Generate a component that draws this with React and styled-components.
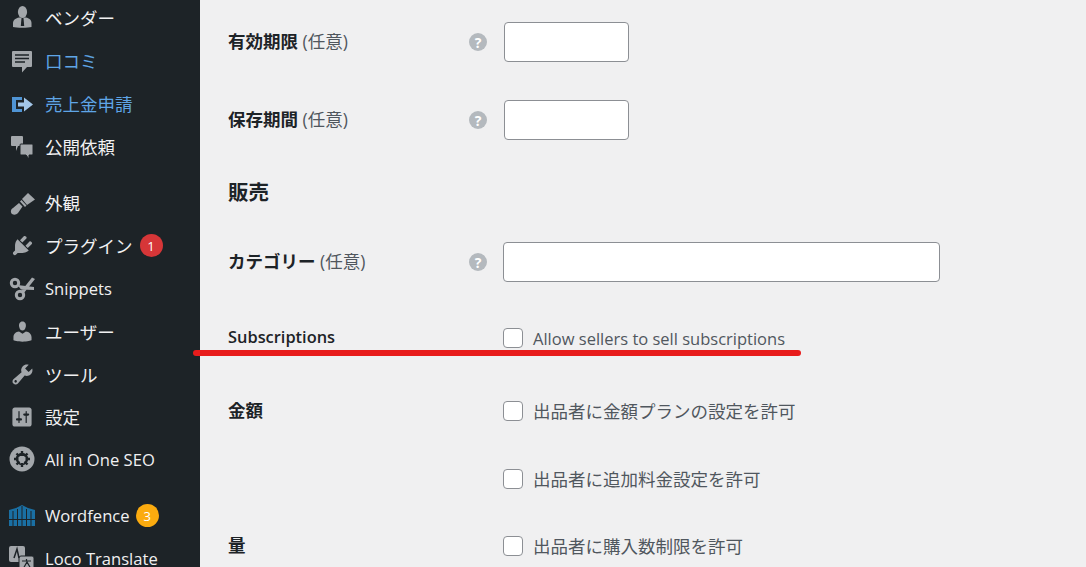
import React from 'react';
import styled, { createGlobalStyle } from 'styled-components';

const Global = createGlobalStyle`
  html, body { margin: 0; padding: 0; height: 567px; overflow: hidden; background: #f0f0f1; }
  body { font-family: "Open Sans", "Noto Sans CJK JP", sans-serif; }
  * { box-sizing: border-box; }
`;
const Page = styled.div`display: flex; width: 1086px; height: 567px; overflow: hidden;`;
const Sidebar = styled.nav`width: 200px; flex: none; background: #1d2327; height: 567px; overflow: hidden;`;
const MenuItem = styled.div`
  height: ${p => p.$h || 43}px; display: flex; align-items: center; padding-left: 9px; gap: 10px;
  margin-top: ${p => p.$gap || 0}px;
  color: ${p => p.$blue ? '#5fa5e6' : '#f0f0f1'}; font-size: ${p => p.$latin ? 16.6 : 17.5}px; white-space: nowrap;
`;
const IconBox = styled.span`width: 26px; height: 26px; flex: none; display: flex; align-items: center; justify-content: center;`;
const Badge = styled.span`
  width: 23px; height: 23px; border-radius: 50%; background: ${p => p.$c}; color: #fff; font-size: 13px;
  display: flex; align-items: center; justify-content: center; margin-left: ${p => p.$ml}px;
`;
const Main = styled.main`flex: 1; padding-left: 28px; color: #1d2327; position: relative;`;
const Row = styled.div`display: flex; align-items: center; height: ${p => p.$h}px;`;
const Label = styled.div`
  width: ${p => p.$w || 241}px; flex: none; font-size: ${p => p.$latin ? 16.4 : 17.5}px; font-weight: ${p => p.$latin ? 600 : 700};
  color: #1d2327; white-space: nowrap; padding-bottom: 3px;
`;
const Opt = styled.span`font-weight: 400; color: #50575e;`;
const Help = styled.span`width: ${p => p.$w}px; flex: none; display: flex;`;
const HelpDot = styled.span`
  width: 18px; height: 18px; border-radius: 50%; background: #b4b9be; color: #fff; font-size: 14px; font-weight: 700;
  display: flex; align-items: center; justify-content: center;
`;
const Input = styled.div`
  width: ${p => p.$w}px; height: 40px; background: #fff; border: 1px solid #8c8f94; border-radius: 4px;
`;
const Heading = styled.h2`margin: 0; font-size: 20.5px; font-weight: 700; color: #1d2327; height: 70px; display: flex; align-items: center;`;
const Check = styled.span`width: 20px; height: 20px; flex: none; border: 1px solid #8c8f94; border-radius: 4px; background: #fff;`;
const CheckText = styled.span`
  font-size: ${p => p.$latin ? 16.5 : 17.5}px; color: #50575e; white-space: nowrap; margin-left: 10px;
  padding-bottom: ${p => p.$latin ? 0 : 2}px;
`;
const Spacer = styled.div`width: 275px; flex: none;`;
const Underline = styled.div`
  position: absolute; left: -7px; top: 350px; width: 608px; height: 6px; border-radius: 3px; background: #e81c1c;
`;

const fill = '#a3a7ab';
const bg = '#1d2327';
const Dash = ({ d, size = 24 }) => (
  <svg width={size} height={size} viewBox="0 0 20 20"><path d={d} fill={fill} fillRule="evenodd" /></svg>
);
const icons = {
  person: <Dash size={25} d="M10 9.250c-2.270 0-2.730-3.440-2.730-3.440C7 4.020 7.820 2 9.970 2c2.160 0 2.980 2.020 2.710 3.810 0 0-.41 3.440-2.680 3.440zm0 2.570L12.720 10c2.390 0 4.520 2.330 4.520 4.530v2.490s-3.650 1.130-7.240 1.130c-3.650 0-7.240-1.130-7.240-1.130v-2.490c0-2.250 1.940-4.480 4.470-4.480z" />,
  vendor: <svg width="22" height="24" viewBox="0 0 22 24"><ellipse cx="11.500" cy="7" rx="4.600" ry="6" fill={fill}/><path d="M2 22v-4c0-3 3-5 6-5.500h7c3 .5 5.500 2.500 5.500 5.500v4c-3 1-15.500 1-18.500 0z" fill={fill}/><path d="M10.500 13h2l.7 8h-3.400z" fill={bg}/></svg>,
  comment: <svg width="22" height="24" viewBox="0 0 22 24"><path d="M2 2h18a1 1 0 0 1 1 1v14a1 1 0 0 1-1 1h-4l-5 5.500V18H2a1 1 0 0 1-1-1V3a1 1 0 0 1 1-1z" fill={fill}/><path d="M4 6h14M4 9.500h14M4 13h10" stroke={bg} strokeWidth="1.500"/></svg>,
  payout: <svg width="22" height="22" viewBox="0 0 22 22"><path d="M1 4h10v3H5v9h6v3H1z" fill="#4f94d4"/><path d="M7 9.500h6V4.500l9 7-9 7v-5H7z" fill="#a3c6e8"/></svg>,
  chat: <svg width="24" height="24" viewBox="0 0 24 24"><path d="M1 2a1 1 0 0 1 1-1h10a1 1 0 0 1 1 1v9H8l-2 5v-5H2a1 1 0 0 1-1-1z" fill={fill}/><path d="M11 9h11a1 1 0 0 1 1 1v9a1 1 0 0 1-1 1h-3v4l-3-4h-5a1 1 0 0 1-1-1v-9a1 1 0 0 1 1-1z" fill={fill} stroke={bg}/></svg>,
  brush: <svg width="26" height="26" viewBox="0 0 26 26"><path d="M3 24C1 22 2 19 4 18l6-5 3.500 3.500L9 23c-2 2-4 2-6 1z" fill={fill}/><path d="M11 11.500l1.500-1.500 5 5.500-1.500 1.500z" fill={fill}/><path d="M13 9l6-6 7 6.500-8 5.500z" fill={fill}/></svg>,
  plug: <Dash size={25} d="M13.110 4.360L9.870 7.600 8 5.730l3.240-3.240c.35-.34 1.050-.2 1.560.32.52.51.66 1.210.31 1.550zm-8 1.770l.91-1.120 9.010 9.010-1.190.84c-.71.71-2.630 1.160-3.820 1.160H6.140L4.900 17.260c-.59.59-1.540.59-2.120 0-.59-.58-.59-1.530 0-2.120l1.240-1.240v-3.880c0-1.130.4-3.190 1.090-3.890zm7.260 3.970l3.240-3.240c.34-.35 1.040-.21 1.550.31.52.51.66 1.210.31 1.550l-3.240 3.250z" />,
  scissors: <svg width="26" height="26" viewBox="0 0 26 26" fill="none"><circle cx="6" cy="7" r="3.700" stroke={fill} strokeWidth="3"/><circle cx="11" cy="19" r="3.700" stroke={fill} strokeWidth="3"/><path d="M8.500 9L25 11 25 14 12 13.500zM12 15.500L23 1.500 26 3 14.500 17.500z" fill={fill}/></svg>,
  wrench: <Dash size={25} d="M16.680 9.770c-1.340 1.340-3.300 1.670-4.950.99l-5.410 6.520c-.99.99-2.590.99-3.580 0s-.99-2.590 0-3.570l6.520-5.420c-.68-1.650-.35-3.610.99-4.950 1.280-1.280 3.120-1.620 4.720-1.060l-2.890 2.890 2.820 2.820 2.860-2.870c.53 1.580.18 3.390-1.080 4.650zM3.810 16.210c.4.39 1.040.39 1.430 0 .4-.4.4-1.040 0-1.430-.39-.4-1.030-.4-1.430 0-.39.39-.39 1.030 0 1.430z" />,
  settings: <Dash size={24} d="M18 16V4c0-1.100-.9-2-2-2H4c-1.100 0-2 .9-2 2v12c0 1.100.9 2 2 2h12c1.100 0 2-.9 2-2zM8 11h1c.55 0 1 .45 1 1s-.45 1-1 1H8v1.500c0 .28-.22.5-.5.5s-.5-.22-.5-.5V13H6c-.55 0-1-.45-1-1s.45-1 1-1h1V5.500c0-.28.22-.5.5-.5s.5.22.5.5V11zm5-2h-1c-.55 0-1-.45-1-1s.45-1 1-1h1V5.500c0-.28.22-.5.5-.5s.5.22.5.5V7h1c.55 0 1 .45 1 1s-.45 1-1 1h-1v5.500c0 .28-.22.5-.5.5s-.5-.22-.5-.5V9z" />,
  aioseo: <svg width="26" height="26" viewBox="0 0 26 26"><circle cx="13" cy="13" r="12.500" fill={fill}/><circle cx="13" cy="13" r="6.200" fill={bg}/><path d="M9.500 10h7v4c0 2-1.500 3.500-3.500 4-2-.5-3.500-2-3.500-4z" fill={fill}/><path d="M13 5v4M13 17v4M5 13h4M17 13h4M7.500 7.500l3 3M15.500 15.500l3 3M18.500 7.500l-3 3M10.500 15.500l-3 3" stroke={bg} strokeWidth="2.400"/></svg>,
  fence: <svg width="26" height="21" viewBox="0 0 26 21"><path d="M0 5l7-2 6-3 6 3 7 2v16H0z" fill="#1a6fa3"/><path d="M0 14.500h26M4 6v15M8.500 4v17M13 1v20M17.500 4v17M22 6v15" stroke={bg} strokeWidth="1"/></svg>,
  loco: <svg width="26" height="26" viewBox="0 0 26 26"><rect x="0" y="0" width="16" height="16" rx="2" fill={fill}/><rect x="10" y="10" width="15" height="15" rx="2" fill={fill} stroke={bg}/><path d="M5 12l3-9 2 9" stroke={bg} strokeWidth="1.500" fill="none"/><path d="M13 15h9M17.500 13v2M14 23l4-7 4 7" stroke={bg} strokeWidth="1.200" fill="none"/></svg>,
};

const items = [
  { t: 'ベンダー', i: 'vendor', h: 34 },
  { t: '口コミ', i: 'comment', blue: true, gap: 5 },
  { t: '売上金申請', i: 'payout', blue: true },
  { t: '公開依頼', i: 'chat' },
  { t: '外観', i: 'brush', gap: 13 },
  { t: 'プラグイン', i: 'plug', badge: ['1', '#d63638', -3] },
  { t: 'Snippets', i: 'scissors', latin: true },
  { t: 'ユーザー', i: 'person' },
  { t: 'ツール', i: 'wrench', h: 42.5 },
  { t: '設定', i: 'settings', h: 42.5 },
  { t: 'All in One SEO', i: 'aioseo', latin: true, h: 42.5 },
  { t: 'Wordfence', i: 'fence', gap: 14, latin: true, h: 42.5, badge: ['3', '#fbab0f', -4] },
  { t: 'Loco Translate', i: 'loco', latin: true },
];

const Field = ({ label, w, help }) => (
  <>
    <Label>{label} <Opt>(任意)</Opt></Label>
    <Help $w={help}><HelpDot>?</HelpDot></Help>
    <Input $w={w} />
  </>
);
const CheckRow = ({ h, label, text, latin }) => (
  <Row $h={h}>
    {label ? <Label $w={275} $latin={latin}>{label}</Label> : <Spacer />}
    <Check />
    <CheckText $latin={latin}>{text}</CheckText>
  </Row>
);

export default function App() {
  return (
    <Page>
      <Global />
      <Sidebar>
        {items.map(it => (
          <MenuItem key={it.t} $h={it.h} $gap={it.gap} $blue={it.blue} $latin={it.latin}>
            <IconBox>{icons[it.i]}</IconBox>
            <span>{it.t}</span>
            {it.badge && <Badge $c={it.badge[1]} $ml={it.badge[2]}>{it.badge[0]}</Badge>}
          </MenuItem>
        ))}
      </Sidebar>
      <Main>
        <Row $h={84}><Field label="有効期限" w={125} help={35} /></Row>
        <Row $h={72}><Field label="保存期間" w={125} help={35} /></Row>
        <Heading>販売</Heading>
        <Row $h={72}><Field label="カテゴリー" w={437} help={34} /></Row>
        <CheckRow h={80} label="Subscriptions" latin text="Allow sellers to sell subscriptions" />
        <CheckRow h={66} label="金額" text="出品者に金額プランの設定を許可" />
        <CheckRow h={70} text="出品者に追加料金設定を許可" />
        <CheckRow h={64} label="量" text="出品者に購入数制限を許可" />
        <Underline />
      </Main>
    </Page>
  );
}
